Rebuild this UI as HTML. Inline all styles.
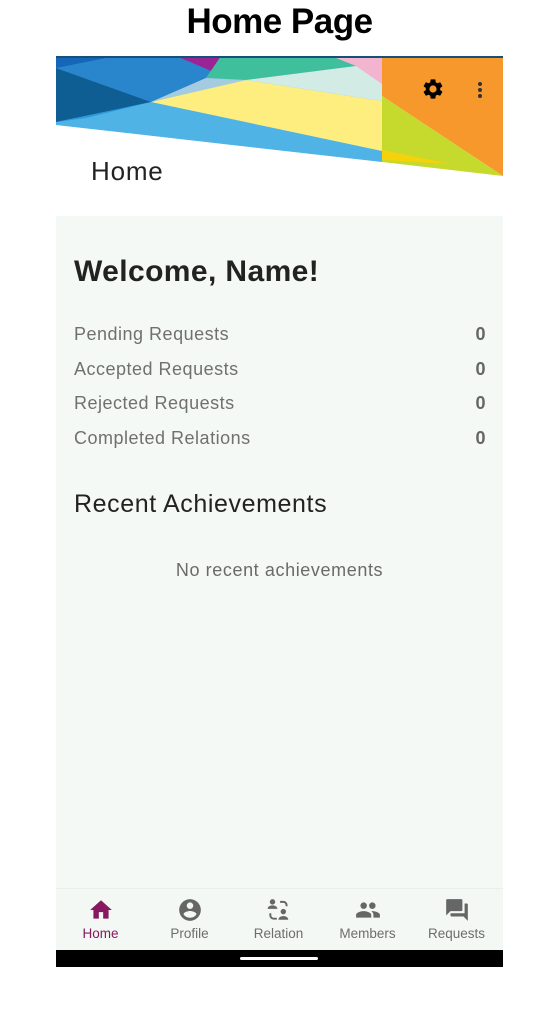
<!DOCTYPE html>
<html><head><style>
body{margin:0;width:559px;height:1023px;background:#fff;position:relative;font-family:"Liberation Sans",sans-serif;overflow:hidden}
.a{position:absolute}
.row{position:absolute;left:74px;width:412px;font-size:18px;letter-spacing:0.5px;color:#707070;display:flex;justify-content:space-between}
.row b{color:#666}
.nav{position:absolute;top:888px;left:56px;width:447px;height:62px;background:#f3f8f4;border-top:1px solid #e8eee9}
.it{position:absolute;top:8px;width:89px;text-align:center;font-size:13.5px;color:#6d6d6d}
.it svg{display:block;margin:0 auto 3px}
</style></head><body>
<div class="a" style="top:2px;width:559px;text-align:center;font-size:35px;font-weight:bold;letter-spacing:-0.5px">Home Page</div>
<svg class="a" style="left:56px;top:56px" width="447" height="122" viewBox="0 0 447 122">
<polygon points="0,0 326,0 326,106 0,69" fill="#4fb3e6"/>
<polygon points="0,0 165,0 150,22 95,46 0,12" fill="#2a86cc"/>
<polygon points="0,0 60,0 0,12" fill="#1565b8"/>
<polygon points="0,12 95,46 40,58 0,66" fill="#0f5e93"/>
<polygon points="0,66 95,46 30,62" fill="#2a9ad8"/>
<polygon points="120,0 190,0 160,17" fill="#9a2495"/>
<polygon points="165,0 280,0 300,10 190,24 150,22" fill="#40bf9c"/>
<polygon points="150,22 190,24 95,46" fill="#a4cbe0"/>
<polygon points="95,46 190,24 326,45 326,95" fill="#fdee7f"/>
<polygon points="190,24 300,10 326,20 326,45" fill="#d3ebe5"/>
<polygon points="275,0 326,0 326,28 300,10" fill="#f3b4d0"/>
<polygon points="326,0 447,0 447,120 326,40" fill="#f7982c"/>
<polygon points="326,40 447,120 326,106" fill="#c6d92d"/>
<polygon points="326,94 395,108 326,104" fill="#f5d20a"/>
<rect x="0" y="0" width="447" height="2" fill="#14507a"/>
</svg>
<svg class="a" style="left:421px;top:77px" width="24" height="24" viewBox="0 0 24 24"><path d="M19.14 12.94c.04-.3.06-.61.06-.94s-.02-.64-.07-.94l2.030-1.58a.49.49 0 0 0 .12-.61l-1.92-3.32a.49.49 0 0 0-.59-.22l-2.39.96c-.5-.38-1.03-.7-1.62-.94l-.36-2.54a.48.48 0 0 0-.48-.41h-3.84c-.24 0-.43.17-.47.41l-.36 2.54c-.59.24-1.130.57-1.62.94l-2.39-.96a.48.48 0 0 0-.59.22L2.74 8.87a.47.47 0 0 0 .12.61l2.03 1.58c-.05.3-.09.63-.09.94s.02.64.07.94l-2.03 1.58a.49.49 0 0 0-.12.61l1.92 3.32c.12.22.37.29.59.22l2.39-.96c.5.38 1.03.7 1.62.94l.36 2.54c.05.24.24.41.48.41h3.84c.24 0 .44-.17.47-.41l.36-2.54c.59-.24 1.13-.56 1.62-.94l2.39.96c.22.08.47 0 .59-.22l1.92-3.32a.47.47 0 0 0-.12-.61l-2.01-1.58zM12 15.6A3.6 3.6 0 1 1 12 8.4a3.6 3.6 0 0 1 0 7.2z"/></svg>
<div class="a" style="left:478px;top:82px;width:4px;height:4px;border-radius:2px;background:#333;box-shadow:0 6px 0 #333,0 12px 0 #333"></div>
<div class="a" style="left:91px;top:156px;font-size:26px;letter-spacing:0.8px;color:#222">Home</div>
<div class="a" style="left:56px;top:216px;width:447px;height:672px;background:#f4f9f5"></div>
<div class="a" style="left:74px;top:255px;font-size:30px;font-weight:bold;letter-spacing:0.4px;color:#222">Welcome, Name!</div>
<div class="row" style="top:324px"><span>Pending Requests</span><b>0</b></div>
<div class="row" style="top:359px"><span>Accepted Requests</span><b>0</b></div>
<div class="row" style="top:393px"><span>Rejected Requests</span><b>0</b></div>
<div class="row" style="top:428px"><span>Completed Relations</span><b>0</b></div>
<div class="a" style="left:74px;top:490px;font-size:25px;letter-spacing:0.6px;color:#222">Recent Achievements</div>
<div class="a" style="left:56px;width:447px;top:560px;text-align:center;font-size:18px;letter-spacing:0.6px;color:#6a6a6a">No recent achievements</div>
<div class="nav">
<div class="it" style="left:0;color:#86195f"><svg width="26" height="26" viewBox="0 0 24 24" fill="#86195f"><path d="M10 20v-6h4v6h5v-8h3L12 3 2 12h3v8z"/></svg>Home</div>
<div class="it" style="left:89px"><svg width="26" height="26" viewBox="0 0 24 24" fill="#666"><path d="M12 2a10 10 0 1 0 0 20 10 10 0 0 0 0-20zm0 3a3 3 0 1 1 0 6 3 3 0 0 1 0-6zm0 14.2a7.2 7.2 0 0 1-6-3.22c.03-1.99 4-3.08 6-3.08s5.970 1.09 6 3.08a7.2 7.2 0 0 1-6 3.22z"/></svg>Profile</div>
<div class="it" style="left:178px"><svg width="26" height="26" viewBox="0 0 24 24" fill="#666"><circle cx="6" cy="4.5" r="2.5"/><path d="M1.5 11c0-2.2 2.2-3.3 4.5-3.3s4.5 1.1 4.5 3.3z"/><circle cx="16" cy="13.5" r="2.5"/><path d="M11.5 21c0-2.2 2.2-3.3 4.5-3.3s4.5 1.1 4.5 3.3z"/><path d="M13 4.5h3a3 3 0 0 1 3 3v1" stroke="#666" stroke-width="1.8" fill="none"/><path d="M10 20H7a3 3 0 0 1-3-3v-2" stroke="#666" stroke-width="1.8" fill="none"/></svg>Relation</div>
<div class="it" style="left:267px"><svg width="26" height="26" viewBox="0 0 24 24" fill="#666"><path d="M16 11a3 3 0 1 0 0-6 3 3 0 0 0 0 6zm-8 0a3 3 0 1 0 0-6 3 3 0 0 0 0 6zm0 2c-2.33 0-7 1.17-7 3.5V19h14v-2.5C15 14.17 10.33 13 8 13zm8 0c-.29 0-.62.02-.97.05 1.16.84 1.97 1.97 1.97 3.45V19h6v-2.5c0-2.33-4.67-3.5-7-3.5z"/></svg>Members</div>
<div class="it" style="left:356px"><svg width="26" height="26" viewBox="0 0 24 24" fill="#666"><path d="M21 6h-2v9H6v2c0 .55.45 1 1 1h11l4 4V7c0-.55-.45-1-1-1zm-4 6V3c0-.55-.45-1-1-1H3c-.55 0-1 .45-1 1v14l4-4h10c.55 0 1-.45 1-1z"/></svg>Requests</div>
</div>
<div class="a" style="left:56px;top:950px;width:447px;height:17px;background:#000"></div>
<div class="a" style="left:240px;top:957px;width:78px;height:3px;background:#fff;border-radius:2px"></div>
</body></html>
